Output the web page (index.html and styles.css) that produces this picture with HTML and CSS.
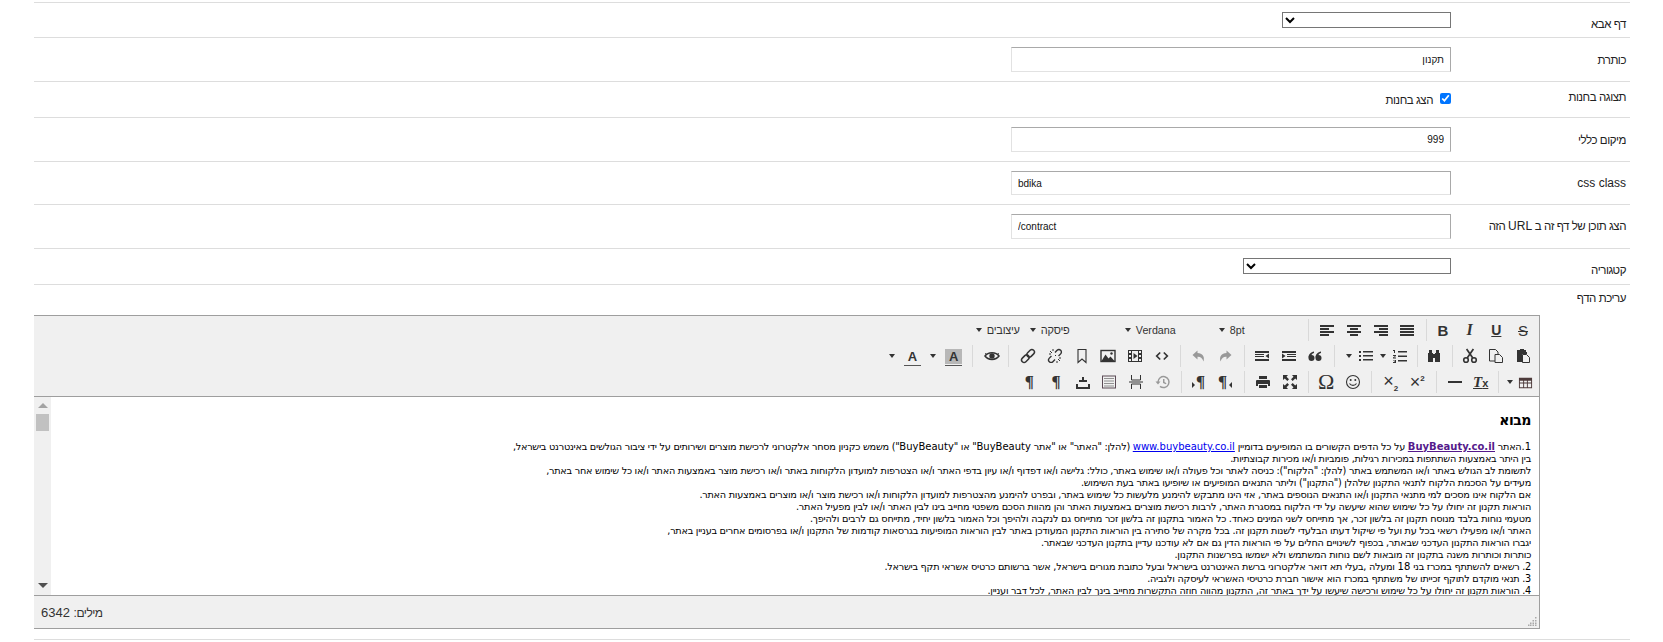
FILE: index.html
```html
<!DOCTYPE html>
<html lang="he" dir="rtl">
<head>
<meta charset="utf-8">
<title>עריכת דף</title>
<link rel="stylesheet" href="styles.css">
</head>
<body>
<svg class="defs" aria-hidden="true">
<defs>
<symbol id="al" viewBox="0 0 16 16"><path d="M1 3h14v2H1zM1 6h9v2H1zM1 9h14v2H1zM1 12h9v2H1z"/></symbol>
<symbol id="ac" viewBox="0 0 16 16"><path d="M1 3h14v2H1zM4 6h8v2H4zM1 9h14v2H1zM4 12h8v2H4z"/></symbol>
<symbol id="ar" viewBox="0 0 16 16"><path d="M1 3h14v2H1zM6 6h9v2H6zM1 9h14v2H1zM6 12h9v2H6z"/></symbol>
<symbol id="aj" viewBox="0 0 16 16"><path d="M1 3h14v2H1zM1 6h14v2H1zM1 9h14v2H1zM1 12h14v2H1z"/></symbol>
<symbol id="paste" viewBox="0 0 16 16"><path d="M5 1h4v1h2v2h1v2H7v8H2V2h3z"/><path d="M7.500 6.500h4l3 3v5h-7z" fill="#f0f0f0" stroke="#333"/></symbol>
<symbol id="copy" viewBox="0 0 16 16"><path d="M1.500 1.500h6l2.500 2.500v9H1.500z" fill="none" stroke="#333"/><path d="M7 6.500h4.500l3 3v5H7z" fill="#f0f0f0" stroke="#333"/></symbol>
<symbol id="cut" viewBox="0 0 16 16"><circle cx="4" cy="12" r="2.300" fill="none" stroke="#333" stroke-width="1.600"/><circle cx="12" cy="12" r="2.300" fill="none" stroke="#333" stroke-width="1.600"/><path d="M5.200 10 11.400 1M10.800 10 4.600 1" stroke="#333" stroke-width="1.700" fill="none"/></symbol>
<symbol id="find" viewBox="0 0 16 16"><path d="M3 2h3v3H3zM10 2h3v3h-3zM2 5h5v9H2zM9 5h5v9H9zM7 6h2v4H7z"/></symbol>
<symbol id="num" viewBox="0 0 16 16"><path d="M1 2h2v3H2V3H1zM1 7h3v1L2 9.500h2v1H1v-1l2-1.500H1zM1 12h3v3H1v-1h2v-.5H2v-.5h1v-.5H1zM6 3h9v1.500H6zM6 7.500h9V9H6zM6 12h9v1.500H6z"/></symbol>
<symbol id="bul" viewBox="0 0 16 16"><path d="M1 3h2v2H1zM1 7h2v2H1zM1 11h2v2H1zM5 3h10v1.500H5zM5 7h10v1.500H5zM5 11h10v1.500H5z"/></symbol>
<symbol id="quote" viewBox="0 0 16 16"><circle cx="4.500" cy="10" r="3"/><path d="M1.500 9.500C1.500 6 4 4 7 3.500V5C5 5.500 4 7 4 9z"/><circle cx="11.500" cy="10" r="3"/><path d="M8.500 9.500C8.500 6 11 4 14 3.500V5c-2 .5-3 2-3 4z"/></symbol>
<symbol id="ind" viewBox="0 0 16 16"><path d="M1 3h14v2H1zM6 6h9v1H6zM6 8h9v1H6zM1 11h14v2H1zM1 5.500 4.500 8 1 10.500z"/></symbol>
<symbol id="out" viewBox="0 0 16 16"><path d="M1 3h14v2H1zM1 6h9v1H1zM1 8h9v1H1zM1 11h14v2H1zM15 5.500 11.500 8l3.500 2.500z"/></symbol>
<symbol id="undo" viewBox="0 0 16 16"><path d="M6.500 2.500 1.500 7l5 4.500V8.700c3-.2 5 1.200 6 4.800 1.500-5-1-8.200-6-8.500z"/></symbol>
<symbol id="redo" viewBox="0 0 16 16"><path d="M9.500 2.500l5 4.500-5 4.500V8.700c-3-.2-5 1.200-6 4.800-1.500-5 1-8.200 6-8.500z"/></symbol>
<symbol id="code" viewBox="0 0 16 16"><path d="M6.200 4.500 2.700 8l3.500 3.500M9.800 4.500 13.300 8l-3.500 3.500" fill="none" stroke="#333" stroke-width="1.700"/></symbol>
<symbol id="media" viewBox="0 0 16 16"><path d="M1 2h14v12H1zM2 3v2h2V3zM2 7v2h2V7zM2 11v2h2v-2zM12 3v2h2V3zM12 7v2h2V7zM12 11v2h2v-2zM5 3v10h6V3z" fill-rule="evenodd"/><path d="M6.500 5v6l4-3z"/></symbol>
<symbol id="image" viewBox="0 0 16 16"><rect x="1" y="2.500" width="14" height="11" fill="none" stroke="#333" stroke-width="1.400"/><path d="M1.500 13 5.500 6.500l3 4 2-2 4 4.500z"/><circle cx="11.500" cy="5.500" r="1.200"/></symbol>
<symbol id="mark" viewBox="0 0 16 16"><path d="M4 1.500h8v13L8 11l-4 3.500z" fill="none" stroke="#333" stroke-width="1.100"/></symbol>
<symbol id="link" viewBox="0 0 16 16"><g transform="rotate(-45 8 8)" fill="none" stroke="#333" stroke-width="1.500"><rect x="0" y="5.500" width="8.500" height="5" rx="2.500"/><rect x="7.500" y="5.500" width="8.500" height="5" rx="2.500"/></g></symbol>
<symbol id="unlink" viewBox="0 0 16 16"><g transform="rotate(-45 8 8)" fill="none" stroke="#333" stroke-width="1.400"><path d="M5.500 5.500h-3a2.500 2.500 0 0 0 0 5h3M10.500 5.500h3a2.500 2.500 0 0 1 0 5h-3"/></g><path d="M2 6h2M6 1v2M10 15v-2M14 10h-2M3 3l2 2M13 13l-2-2M8 7l1 1" stroke="#333" fill="none"/></symbol>
<symbol id="eye" viewBox="0 0 16 16"><path d="M1 8C4 3.500 12 3.500 15 8 12 12.500 4 12.500 1 8z" fill="none" stroke="#333" stroke-width="1.500"/><circle cx="8" cy="8" r="2.700"/><path d="M1 5.500 3 6.500M15 5.500 13 6.500" stroke="#333"/></symbol>
<symbol id="upload" viewBox="0 0 16 16"><path d="M1 10h2v3h10v-3h2v5H1zM7 3h2v3h3v2H4V6h3z"/></symbol>
<symbol id="tpl" viewBox="0 0 16 16"><rect x="1.500" y="2" width="13" height="12" fill="none" stroke="#5b4a55"/><path d="M3.500 4.500h9M3.500 7h9M3.500 9.500h9M3.500 12h9" stroke="#333" stroke-dasharray="1 1" fill="none"/></symbol>
<symbol id="pb" viewBox="0 0 16 16"><path d="M3.500 1v5h9V1M3.500 15v-5h9v5" fill="none" stroke="#333"/><path d="M1 8h14" stroke="#333"/></symbol>
<symbol id="restore" viewBox="0 0 16 16"><path d="M3 8a5.500 5.500 0 1 1 2 4.300" fill="none" stroke="#999" stroke-width="1.500"/><path d="M.5 7.500h5L3 10.500zM8 5h1.500v3l2 1.200-.7 1L8 9z" fill="#999"/></symbol>
<symbol id="print" viewBox="0 0 16 16"><path d="M4 2h8v3H4zM2 6h12a1 1 0 0 1 1 1v5h-2v-2H3v2H1V7a1 1 0 0 1 1-1zM4 11h8v3H4z"/></symbol>
<symbol id="full" viewBox="0 0 16 16"><path d="M1 1h5L4.500 2.800 7 5.300 5.300 7 2.800 4.500 1 6zM15 1v5l-1.800-1.500L10.700 7 9 5.300l2.500-2.500L10 1zM1 15v-5l1.800 1.500L5.300 9 7 10.700l-2.500 2.500L6 15zM15 15h-5l1.500-1.800L9 10.700 10.700 9l2.500 2.500L15 10z"/></symbol>
<symbol id="smile" viewBox="0 0 16 16"><circle cx="8" cy="8" r="6.500" fill="none" stroke="#333" stroke-width="1.100"/><circle cx="5.700" cy="6" r="1"/><circle cx="10.300" cy="6" r="1"/><path d="M4.500 9.500c1.500 2.500 5.500 2.500 7 0" fill="none" stroke="#333" stroke-width="1.100"/></symbol>
<symbol id="hr" viewBox="0 0 16 16"><path d="M1 7h14v2H1z"/></symbol>
<symbol id="tbl" viewBox="0 0 16 16"><path d="M1 3h14v11H1zM2 6v2h3.500V6zM6.500 6v2h3V6zM10.500 6v2H14V6zM2 9v4h3.500V9zM6.500 9v4h3V9zM10.500 9v4H14V9z" fill="#4d3b3b" fill-rule="evenodd"/></symbol>
</defs>
</svg>

<main class="form">
  <div class="row"><div class="lbl">דף אבא</div><div class="field"><select class="sel sel-parent"><option></option></select></div></div>
  <div class="row"><div class="lbl lbl-low">כותרת</div><div class="field"><input class="txt" type="text" value="תקנון"></div></div>
  <div class="row row-check"><div class="lbl">תצוגה בחנות</div><div class="field check-field"><input class="chk" type="checkbox" checked><span class="chk-text">הצג בחנות</span></div></div>
  <div class="row"><div class="lbl lbl-low">מיקום כללי</div><div class="field"><input class="txt" type="text" value="999"></div></div>
  <div class="row"><div class="lbl lbl-latin">css class</div><div class="field"><input class="txt txt-short txt-ltr" type="text" value="bdika"></div></div>
  <div class="row"><div class="lbl">הצג תוכן של דף זה ב <span class="lbl-latin">URL</span> הזה</div><div class="field"><input class="txt txt-ltr" type="text" value="/contract"></div></div>
  <div class="row row-last"><div class="lbl">קטגוריה</div><div class="field"><select class="sel sel-cat"><option></option></select></div></div>
  <div class="row-editor">
    <div class="lbl lbl-edit">עריכת הדף</div>
    <div class="editor">
      <div class="toolbar">
        <div class="tb-row">
          <div class="b t-s">S</div><div class="b t-u">U</div><div class="b t-i">I</div><div class="b t-b">B</div>
          <div class="sep s3"></div>
          <div class="b"><svg class="ic"><use href="#aj"/></svg></div><div class="b"><svg class="ic"><use href="#ar"/></svg></div><div class="b"><svg class="ic"><use href="#ac"/></svg></div><div class="b"><svg class="ic"><use href="#al"/></svg></div>
          <div class="sep s5"></div>
          <div class="lb lb-size"><span class="lb-t">8pt</span><i class="arw"></i></div>
          <div class="lb lb-font"><span class="lb-t">Verdana</span><i class="arw"></i></div>
          <div class="lb lb-para"><span class="lb-t lb-he">פיסקה</span><i class="arw"></i></div>
          <div class="lb lb-style"><span class="lb-t lb-he">עיצובים</span><i class="arw"></i></div>
        </div>
        <div class="tb-row">
          <div class="b"><svg class="ic"><use href="#paste"/></svg></div><div class="b"><svg class="ic"><use href="#copy"/></svg></div><div class="b"><svg class="ic"><use href="#cut"/></svg></div>
          <div class="sep s3"></div>
          <div class="b"><svg class="ic"><use href="#find"/></svg></div>
          <div class="sep s3"></div>
          <div class="b b24"><svg class="ic"><use href="#num"/></svg></div><div class="ar10"><i class="arw"></i></div><div class="b b24"><svg class="ic"><use href="#bul"/></svg></div><div class="ar10"><i class="arw"></i></div>
          <div class="sep s9"></div>
          <div class="b"><svg class="ic"><use href="#quote"/></svg></div><div class="b"><svg class="ic"><use href="#ind"/></svg></div><div class="b"><svg class="ic"><use href="#out"/></svg></div>
          <div class="sep s4"></div>
          <div class="b off"><svg class="ic"><use href="#redo"/></svg></div><div class="b off"><svg class="ic"><use href="#undo"/></svg></div>
          <div class="sep s4"></div>
          <div class="b"><svg class="ic"><use href="#code"/></svg></div><div class="b"><svg class="ic"><use href="#media"/></svg></div><div class="b"><svg class="ic"><use href="#image"/></svg></div><div class="b"><svg class="ic"><use href="#mark"/></svg></div><div class="b"><svg class="ic"><use href="#unlink"/></svg></div><div class="b"><svg class="ic"><use href="#link"/></svg></div>
          <div class="sep s6"></div>
          <div class="b b23"><svg class="ic"><use href="#eye"/></svg></div>
          <div class="sep s7"></div>
          <div class="b"><span class="col col-bg">A</span></div><div class="ar14"><i class="arw"></i></div><div class="b b28"><span class="col">A</span></div><div class="ar12"><i class="arw"></i></div>
        </div>
        <div class="tb-row">
          <div class="b b-tbl"><svg class="ic ic-tbl"><use href="#tbl"/></svg></div><div class="ar8"><i class="arw"></i></div>
          <div class="sep s7"></div>
          <div class="b b24"><span class="t-tx">T<small>x</small></span></div><div class="b b28"><svg class="ic"><use href="#hr"/></svg></div>
          <div class="sep s4"></div>
          <div class="b t-x" dir="ltr"><span>×<sup>2</sup></span></div><div class="b t-x" dir="ltr"><span>×<sub>2</sub></span></div>
          <div class="sep s5"></div>
          <div class="b"><svg class="ic"><use href="#smile"/></svg></div><div class="b t-om">Ω</div>
          <div class="sep s4"></div>
          <div class="b"><svg class="ic"><use href="#full"/></svg></div><div class="b"><svg class="ic"><use href="#print"/></svg></div>
          <div class="sep s5"></div>
          <div class="b t-p" dir="ltr"><span>¶</span><i class="tri-l"></i></div><div class="b t-p" dir="ltr"><i class="tri-r"></i><span>¶</span></div>
          <div class="sep s3"></div>
          <div class="b"><svg class="ic"><use href="#restore"/></svg></div><div class="b"><svg class="ic"><use href="#pb"/></svg></div><div class="b"><svg class="ic"><use href="#tpl"/></svg></div><div class="b"><svg class="ic"><use href="#upload"/></svg></div><div class="b t-p">¶</div><div class="b t-p">¶</div>
        </div>
      </div>
      <div class="edit-area">
        <div class="content">
          <h1 class="doc-h">מבוא</h1>
          <p class="ln"><span class="lat">1.</span>האתר <a class="lnk-b lat">BuyBeauty.co.il</a> על כל הדפים הקשורים בו המופיעים בדומיין <a class="lnk lat">www.buybeauty.co.il</a> (להלן: "האתר" או "אתר <span class="lat">BuyBeauty</span>" או "<span class="lat">BuyBeauty</span>") משמש כקניון מסחר אלקטרוני לרכישת מוצרים ושירותים על ידי ציבור הגולשים באינטרנט בישראל,</p>
          <p class="ln">בין היתר באמצעות השתתפות במכירות רגילות, פומביות ו/או מכירות קבוצתיות.</p>
          <p class="ln">לתשומת לב הגולש באתר ו/או המשתמש באתר (להלן: "הלקוח"): כניסה לאתר וכל פעולה ו/או שימוש באתר, כולל: גלישה ו/או דפדוף ו/או עיון בדפי האתר ו/או הצטרפות למועדון הלקוחות באתר ו/או רכישת מוצר באמצעות האתר ו/או כל שימוש אחר באתר,</p>
          <p class="ln">מעידים על הסכמת הלקוח לתנאי התקנון שלהלן ("התקנון") וליתר התנאים המופיעים או שיופיעו באתר בעת השימוש.</p>
          <p class="ln">אם הלקוח אינו מסכים למי מתנאי התקנון ו/או התנאים הנוספים באתר, אזי הינו מתבקש להימנע מלעשות כל שימוש באתר, ובפרט להימנע מהצטרפות למועדון הלקוחות ו/או רכישת מוצר ו/או מוצרים באמצעות האתר.</p>
          <p class="ln">הוראות תקנון זה יחולו על כל שימוש שהוא שיעשה על ידי הלקוח במסגרת האתר, לרבות רכישת מוצרים באמצעות האתר והן מהוות הסכם משפטי מחייב בינו לבין האתר ו/או לבין מפעיל האתר.</p>
          <p class="ln">מטעמי נוחות בלבד מנוסח תקנון זה בלשון זכר, אך מתייחס לשני המינים כאחד. כל האמור בתקנון זה בלשון זכר מתייחס גם לנקבה ולהיפך וכל האמור בלשון יחיד, מתייחס גם לרבים ולהיפך.</p>
          <p class="ln">האתר ו/או מפעילו רשאי בכל עת ועל פי שיקול דעתו הבלעדי לשנות תקנון זה. בכל מקרה של סתירה בין הוראות התקנון המעודכן באתר לבין הוראות המופיעות בגרסאות קודמות של התקנון ו/או בפרסומים אחרים בעניין באתר,</p>
          <p class="ln">יגברו הוראות התקנון העדכני שבאתר, בכפוף לשינויים החלים על פי הוראות הדין גם אם לא עודכנו עדיין בתקנון העדכני שבאתר.</p>
          <p class="ln">כותרות וכותרות משנה בתקנון זה מובאות לשם נוחות המשתמש ולא ישמשו בפרשנות התקנון.</p>
          <p class="ln">2. רשאים להשתתף במכרז בני <span class="lat">18</span> ומעלה ,בעלי תא דואר אלקטרוני ברשת האינטרנט בישראל ובעל כתובת מגורים בישראל, אשר ברשותם כרטיס אשראי תקף בישראל.</p>
          <p class="ln">3. תנאי מוקדם לתוקף זכייתו של משתתף במכרז הוא אישור חברת כרטיסי האשראי לעיסקה ולגביה.</p>
          <p class="ln ln-last">4. הוראות תקנון זה יחולו על כל שימוש ורכישה שיעשו על ידך באתר זה, התקנון מהווה חוזה התקשרות מחייב בינך לבין האתר, לכל דבר ועניין.</p>
        </div>
        <div class="sb">
          <i class="sb-up"></i>
          <div class="sb-thumb"></div>
          <i class="sb-down"></i>
        </div>
      </div>
      <div class="status">
        <svg class="grip" viewBox="0 0 9 9"><path d="M7 0h1.500v1.500H7zM7 3h1.500v1.500H7zM4.500 3H6v1.500H4.500zM7 5.500h1.500V7H7zM4.500 5.500H6V7H4.500zM2 5.500h1.500V7H2zM7 7.500h1.500V9H7zM4.500 7.500H6V9H4.500zM2 7.500h1.500V9H2zM0 7.500h1.500V9H0z"/></svg>
        <span class="words"><span class="words-he">מילים:</span> 6342</span>
      </div>
    </div>
  </div>
</main>
</body>
</html>
```

FILE: styles.css
```css
* { box-sizing: border-box; }
html, body { margin: 0; padding: 0; background: #fff; }
body { font-family: "Liberation Sans", Arial, sans-serif; font-size: 12px; color: #222; overflow: hidden; }
.defs { width: 0; height: 0; position: absolute; }

.form { margin: 2px 33px 0 34px; border-bottom: 1px solid #ddd; }
.row {
  display: grid;
  grid-template-columns: 179px 1fr;
  border-top: 1px solid #ddd;
  padding: 9px 0;
}
.row-last { padding-bottom: 10px; }
.lbl { padding-right: 4px; margin: 5px 0 -10px; line-height: 14px; height: 14px; white-space: nowrap; font-size: 11.5px; letter-spacing: -.45px; }
.lbl-low { margin-top: 6px; }
.lbl-latin { font-size: 12px; letter-spacing: 0; }
.field { display: flex; justify-content: flex-start; }

.sel {
  display: block;
  height: 16px;
  padding: 0;
  margin: 0;
  font: 10px "Liberation Sans", sans-serif;
  background: #fff;
  border: 1px solid #767676;
  border-radius: 0;
}
.sel-parent { width: 169px; }
.sel-cat { width: 208px; }

.txt {
  display: block;
  width: 440px;
  height: 25px;
  padding: 0 6px;
  margin: 0;
  font: 10px "Liberation Sans", sans-serif;
  color: #111;
  background: #fff;
  border: 1px solid #e2e2e2;
  border-top-color: #a9a9a9;
  border-right-color: #a9a9a9;
  border-radius: 0;
  outline: 0;
}
.txt-short { height: 24px; }
.txt-ltr { direction: ltr; text-align: left; }

.row-check { height: 36px; padding: 0; }
.row-check .lbl { margin-top: 8px; }
.check-field { align-items: flex-start; padding-top: 11px; }
.chk { width: 11px; height: 11px; margin: 0; }
.chk-text { margin-right: 7px; line-height: 14px; font-size: 11.5px; letter-spacing: -.45px; }

.row-editor { border-top: 1px solid #ddd; padding: 6px 0 10px; }
.lbl-edit { margin: 0 0 10px; }

.editor { margin-right: 90px; border: 1px solid #9e9e9e; border-left: 0; }
.toolbar {
  background: #f0f0f0;
  border-bottom: 1px solid #9e9e9e;
  padding: 3px 2.65px 2px 0;
  height: 81px;
  display: flex;
  flex-direction: column;
  gap: 4px;
}
.tb-row { display: flex; align-items: center; height: 22px; }
.b { flex: none; width: 26.7px; height: 22px; display: flex; align-items: center; justify-content: center; color: #333; }
.b24 { width: 24px; }
.b23 { width: 23px; }
.b28 { width: 28px; }
.b-tbl { width: 22.7px; }
.off { color: #999; }
.ic { width: 16px; height: 16px; fill: currentColor; display: block; }
.ic-tbl { width: 15px; height: 15px; }
.sep { flex: none; width: 1px; height: 22px; background: #d9d9d9; margin-left: 5px; }
.s3 { margin-right: 3px; }
.s4 { margin-right: 4px; }
.s5 { margin-right: 5px; }
.s6 { margin-right: 6px; }
.s7 { margin-right: 7px; }
.s9 { margin-right: 9px; }

.arw { display: block; width: 0; height: 0; border: 3.5px solid transparent; border-top: 4px solid #333; border-bottom: 0; }
.ar8, .ar10, .ar12, .ar14 { flex: none; height: 22px; display: flex; align-items: center; justify-content: center; }
.ar8 { width: 8px; }
.ar10 { width: 10px; }
.ar12 { width: 12px; }
.ar14 { width: 14px; }

.lb { flex: none; height: 22px; display: flex; align-items: center; justify-content: flex-end; gap: 5px; padding-left: 3px; font-size: 10.7px; color: #333; }
.lb-he { font-size: 11px; letter-spacing: -.3px; }
.lb-size { width: 87px; }
.lb-font { width: 94px; }
.lb-para { width: 95px; }
.lb-style { width: 54px; }

.t-b { font: bold 15px "Liberation Sans", sans-serif; }
.t-i { font: italic bold 16px "Liberation Serif", serif; }
.t-u { font: bold 14px "Liberation Sans", sans-serif; text-decoration: underline; }
.t-s { font: 15px "Liberation Sans", sans-serif; text-decoration: line-through; }
.t-om { font: 22px "Liberation Serif", serif; }
.t-p { font: bold 17px "Liberation Serif", serif; }
.t-x { font: 18px "Liberation Sans", sans-serif; line-height: 18px; }
.t-x sup, .t-x sub { font: bold 8px "Liberation Sans", sans-serif; }
.t-x sup { vertical-align: 7px; }
.t-x sub { vertical-align: -4px; }
.t-tx { font: italic bold 15px "Liberation Serif", serif; text-decoration: underline; }
.t-tx small { font: bold 11px "Liberation Sans", sans-serif; }
.col { display: block; width: 17px; height: 17px; margin-top: 2px; text-align: center; font: bold 13px/15px "Liberation Sans", sans-serif; border-bottom: 1px solid #555; }
.col-bg { background: #b7b7b7; background-clip: content-box; padding-bottom: 1px; }
.tri-l, .tri-r { display: block; width: 0; height: 0; border: 3px solid transparent; border-left-width: 0; border-right-width: 0; margin-top: 5px; }
.tri-l { border-right: 3px solid #333; margin-left: 2px; }
.tri-r { border-left: 3px solid #333; margin-right: 1px; }

.edit-area { display: flex; height: 198px; background: #fff; overflow: hidden; }
.content { flex: 1; min-width: 0; padding: 14px 8px 0 0; overflow: hidden; font-family: "DejaVu Sans", Verdana, sans-serif; font-size: 9.7px; letter-spacing: -.26px; color: #000; }
.doc-h { margin: 0 0 12px; font-size: 14px; letter-spacing: -.5px; line-height: 18px; font-weight: bold; }
.ln { margin: 0; line-height: 12px; height: 12px; white-space: nowrap; }
.ln-last { height: 10px; line-height: 12px; }
.lat { font-size: 10px; letter-spacing: 0; }
.lnk { color: #00e; text-decoration: underline; }
.lnk-b { color: #551a8b; font-weight: bold; text-decoration: underline; }

.sb { flex: none; width: 17px; background: #f0f0f0; display: flex; flex-direction: column; align-items: center; padding-top: 6px; }
.sb-up { display: block; width: 0; height: 0; border: 5px solid transparent; border-top: 0; border-bottom: 5px solid #a3a3a3; }
.sb-thumb { width: 13px; height: 17px; background: #c1c1c1; margin-top: 6px; }
.sb-down { display: block; width: 0; height: 0; border: 5px solid transparent; border-bottom: 0; border-top: 5px solid #505050; margin-top: auto; margin-bottom: 7px; }

.status {
  height: 33px;
  background: #f0f0f0;
  border-top: 1px solid #9e9e9e;
  display: flex;
  align-items: center;
  justify-content: space-between;
  padding: 0 2px 0 7px;
  font-size: 13px;
  color: #333;
}
.words-he { font-size: 12px; letter-spacing: -.5px; }
.grip { width: 9px; height: 9px; fill: #a8a8a8; align-self: flex-end; margin-bottom: 2px; }
```
